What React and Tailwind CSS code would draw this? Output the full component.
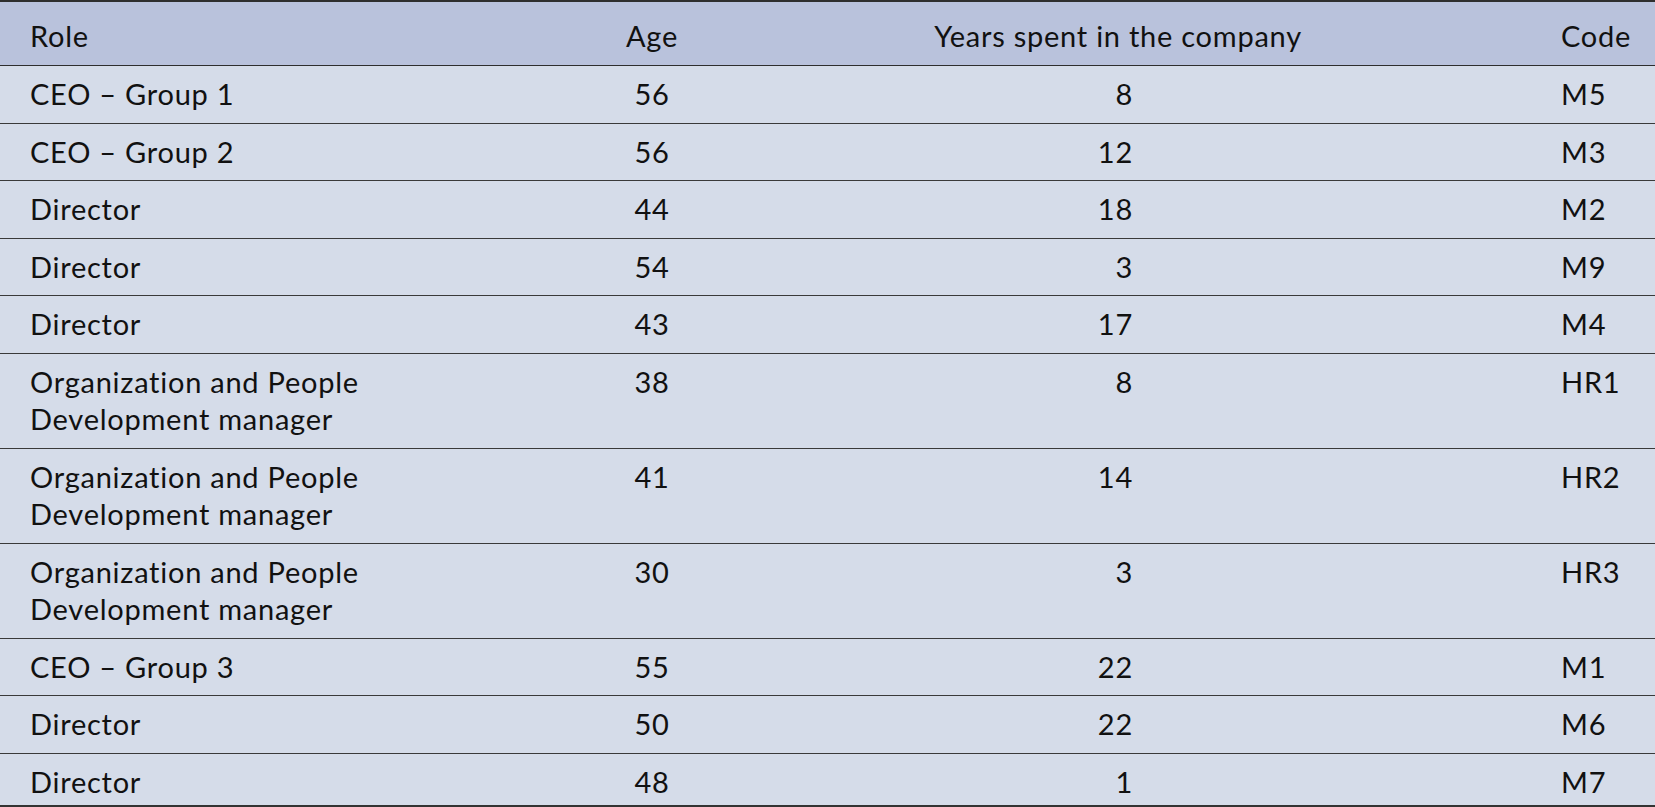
import React from "react";

const rows = [
  { role: "CEO – Group 1", age: "56", years: "8", code: "M5" },
  { role: "CEO – Group 2", age: "56", years: "12", code: "M3" },
  { role: "Director", age: "44", years: "18", code: "M2" },
  { role: "Director", age: "54", years: "3", code: "M9" },
  { role: "Director", age: "43", years: "17", code: "M4" },
  { role: ["Organization and People", "Development manager"], age: "38", years: "8", code: "HR1" },
  { role: ["Organization and People", "Development manager"], age: "41", years: "14", code: "HR2" },
  { role: ["Organization and People", "Development manager"], age: "30", years: "3", code: "HR3" },
  { role: "CEO – Group 3", age: "55", years: "22", code: "M1" },
  { role: "Director", age: "50", years: "22", code: "M6" },
  { role: "Director", age: "48", years: "1", code: "M7" },
];

export default function App() {
  return (
    <div
      className="w-[1655px] h-[807px] overflow-hidden bg-[#d5dce9] text-[#111111]"
      style={{ fontFamily: "Lato, 'Noto Sans', sans-serif" }}
    >
      <table className="w-[1655px] table-fixed border-collapse text-[29px] leading-[37.5px] tracking-[0.75px]">
        <colgroup>
          <col className="w-[560px]" />
          <col className="w-[184px]" />
          <col className="w-[748px]" />
          <col className="w-[163px]" />
        </colgroup>
        <thead>
          <tr className="bg-[#b9c2dc] border-t-2 border-b border-[#2e2e2e]">
            <th className="pl-[30px] pt-[15px] pb-[10.5px] text-left font-normal align-top">Role</th>
            <th className="pt-[15px] pb-[10.5px] text-center font-normal align-top">Age</th>
            <th className="pt-[15px] pb-[10.5px] text-center font-normal align-top">Years spent in the company</th>
            <th className="pl-[69px] pt-[15px] pb-[10.5px] text-left font-normal align-top">Code</th>
          </tr>
        </thead>
        <tbody>
          {rows.map((r, i) => {
            const last = i === rows.length - 1;
            const pad = last ? "pt-[9px] pb-[5px]" : "pt-[9px] pb-[10px]";
            return (
              <tr
                key={i}
                className={
                  last
                    ? "border-b-[3px] border-[#333333]"
                    : "border-b border-[#3a3a3a]"
                }
              >
                <td className={`pl-[30px] ${pad} align-top`}>
                  {Array.isArray(r.role) ? (
                    <>
                      {r.role[0]}
                      <br />
                      {r.role[1]}
                    </>
                  ) : (
                    r.role
                  )}
                </td>
                <td className={`${pad} text-center align-top`}>{r.age}</td>
                <td className={`pr-[359px] ${pad} text-right align-top`}>{r.years}</td>
                <td className={`pl-[69px] ${pad} text-left align-top`}>{r.code}</td>
              </tr>
            );
          })}
        </tbody>
      </table>
    </div>
  );
}
